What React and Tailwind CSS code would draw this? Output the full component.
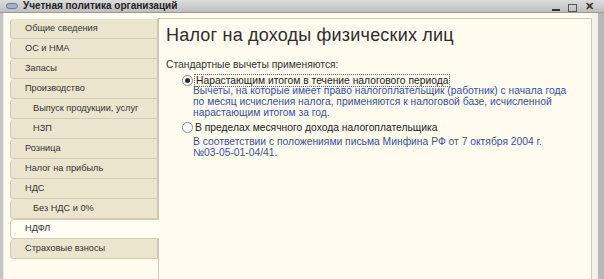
import React from 'react';

const tabs = [
  { label: 'Общие сведения' },
  { label: 'ОС и НМА' },
  { label: 'Запасы' },
  { label: 'Производство' },
  { label: 'Выпуск продукции, услуг', sub: true },
  { label: 'НЗП', sub: true },
  { label: 'Розница' },
  { label: 'Налог на прибыль' },
  { label: 'НДС' },
  { label: 'Без НДС и 0%', sub: true },
  { label: 'НДФЛ', active: true },
  { label: 'Страховые взносы' },
];

function Radio({ checked }) {
  return (
    <span className="w-[11px] h-[11px] rounded-full border border-[#8a8a80] bg-white flex items-center justify-center shrink-0">
      {checked && <span className="w-[5px] h-[5px] rounded-full bg-[#2b2b2b]" />}
    </span>
  );
}

export default function App() {
  return (
    <div className="w-[604px] h-[279px] overflow-hidden flex flex-col bg-[#fffbef] font-['Liberation_Sans',Arial,sans-serif]">
      {/* title bar */}
      <div className="h-[13px] shrink-0 flex items-center bg-gradient-to-b from-[#dcdcdc] to-[#bfbfbf] border-b border-[#9a9a9a]">
        <span className="ml-[6px] w-[12px] h-[6px] rounded-sm bg-[#9fb3cc] border border-[#6d7f99]" />
        <span className="ml-[5px] text-[10px] leading-none font-bold text-[#222]">Учетная политика организаций</span>
        <div className="ml-auto mr-[10px] flex items-end gap-[8px] text-[#333]">
          <span className="w-[8px] h-[2px] bg-[#333] mb-[1px]" />
          <span className="w-[9px] h-[8px] border border-[#555]" />
          <span className="text-[11px] leading-none font-bold">✕</span>
        </div>
      </div>

      <div className="flex flex-1 min-h-0">
        <div className="w-[4px] bg-[#c4c4c4] border-r border-[#e8e8e8]" />

        {/* tabs */}
        <div className="w-[154px] pt-[6px] pl-[6px] shrink-0">
          {tabs.map((t) => (
            <div
              key={t.label}
              className={
                'h-[20px] flex items-center rounded-l-[4px] border-l border-b border-[#d4ccb0] text-[9.2px] text-[#333] ' +
                (t.sub ? 'pl-[22px] ' : 'pl-[14px] ') +
                (t.active
                  ? 'bg-[#fffdf4] border-t border-t-[#d4ccb0] relative z-10 mr-[-1px]'
                  : 'bg-[#ece5cd] border-r border-r-[#cfc7aa]')
              }
            >
              {t.label}
            </div>
          ))}
        </div>

        {/* content panel */}
        <div className="flex-1 mt-[5px] border-l border-t border-r border-[#cfc9b4] bg-[#fffbef] pl-[7px] pt-[5px]">
          <h1 className="text-[18px] leading-[22px] text-[#2e2e2e] tracking-[0.2px]">
            Налог на доходы физических лиц
          </h1>
          <div className="mt-[12px] text-[10.3px] leading-[13px] text-[#333]">Стандартные вычеты применяются:</div>

          <div className="mt-[3px] ml-[16px] flex items-center gap-[1px]">
            <Radio checked />
            <span className="text-[10.3px] leading-[11px] text-[#222] border border-dotted border-[#666] px-[1px]">
              Нарастающим итогом в течение налогового периода
            </span>
          </div>
          <div className="mt-[-2px] ml-[27px] text-[10.3px] leading-[11px] text-[#3550a6]">
            <div>Вычеты, на которые имеет право налогоплательщик (работник) с начала года</div>
            <div>по месяц исчисления налога, применяются к налоговой базе, исчисленной</div>
            <div>нарастающим итогом за год.</div>
          </div>

          <div className="mt-[4px] ml-[16px] flex items-center gap-[1px]">
            <Radio />
            <span className="text-[10.3px] leading-[11px] text-[#222] px-[1px]">
              В пределах месячного дохода налогоплательщика
            </span>
          </div>
          <div className="mt-[3px] ml-[27px] text-[10.3px] leading-[11px] text-[#3550a6]">
            <div>В соответствии с положениями письма Минфина РФ от 7 октября 2004 г.</div>
            <div>№03-05-01-04/41.</div>
          </div>
        </div>

        <div className="w-[12px] shrink-0 flex">
          <div className="w-[6px] bg-[#f4f1e6]" />
          <div className="w-[6px] bg-[#b8b8b8]" />
        </div>
      </div>
    </div>
  );
}
